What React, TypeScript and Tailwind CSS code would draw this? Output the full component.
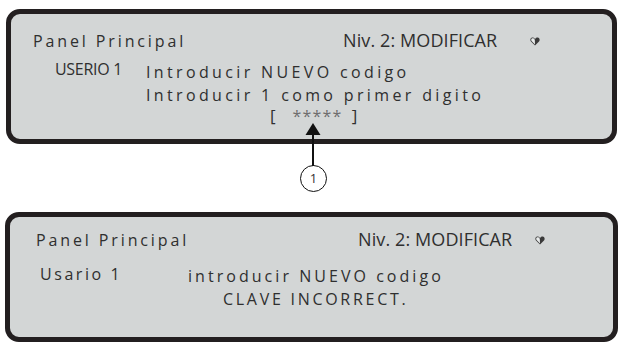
import React from 'react';

const font = { fontFamily: '"Open Sans", "Noto Sans", sans-serif' };

const Heart: React.FC = () => (
  <svg width="10" height="9" viewBox="0 0 10 9" className="mt-[1px] self-center">
    <path d="M5 8.6 L1 4.4 C-0.2 3 0.3 0.6 2.3 0.4 C3.5 0.3 4.5 1 5 2 C5.5 1 6.5 0.3 7.7 0.4 C9.7 0.6 10.2 3 9 4.4 Z" fill="#3a3a3a" />
    <path d="M5 7.6 L1.6 4 C0.8 3 1.2 1.3 2.5 1.2 C3.6 1.1 4.4 1.8 4.8 2.8 L5 7.6 Z" fill="#e9ecec" />
  </svg>
);

const Panel: React.FC<{ className: string; children: React.ReactNode }> = ({ className, children }) => (
  <div className={`border-[5px] border-[#231f20] rounded-[14px] bg-[#d3d6d6] text-[#2f2f2f] ${className}`}>
    {children}
  </div>
);

const App: React.FC = () => {
  return (
    <div className="w-[618px] h-[342px] overflow-hidden bg-white pt-[9px]" style={font}>
      <div className="relative">
        <Panel className="ml-[6px] w-[611px] h-[135px]">
          <div className="flex items-baseline pl-[22px] pt-[15px] leading-[23px]">
            <span className="w-[310px] text-[16px] tracking-[0.18em]">Panel Principal</span>
            <span className="w-[187px] text-[18px] tracking-[0.1px]">Niv. 2: MODIFICAR</span>
            <Heart />
          </div>
          <div className="flex items-start pl-[44px] mt-[8px]">
            <span className="w-[91px] text-[16px] leading-[17px] tracking-[-0.3px]">USERIO 1</span>
            <div className="flex flex-col text-[16px] tracking-[0.21em]">
              <span className="leading-[23px]">Introducir NUEVO codigo</span>
              <span className="leading-[23px]">Introducir 1 como primer digito</span>
              <div className="flex items-baseline leading-[17px] ml-[124px] tracking-normal">
                <span className="text-[17px]">[</span>
                <span className="ml-[17px] text-[16px] text-[#6e6e6e] tracking-[1.2px]">*****</span>
                <span className="ml-[9px] text-[17px]">]</span>
              </div>
            </div>
          </div>
        </Panel>

        <svg className="absolute left-[304px] top-[113px]" width="18" height="44" viewBox="0 0 18 44">
          <path d="M9 1 L16.5 13 L1.5 13 Z" fill="#111" />
          <line x1="9" y1="12" x2="9" y2="44" stroke="#111" strokeWidth="2" />
        </svg>

        <div className="h-[68px] flex items-start">
          <div className="ml-[300px] mt-[21px] w-[27px] h-[27px] rounded-full border-[1.5px] border-[#111] flex items-center justify-center text-[13px] text-[#333] leading-none">
            1
          </div>
        </div>
      </div>

      <Panel className="ml-[5px] w-[613px] h-[130px]">
        <div className="flex items-baseline pl-[26px] pt-[11px] leading-[23px]">
          <span className="w-[322px] text-[16px] tracking-[0.18em]">Panel Principal</span>
          <span className="w-[177px] text-[18px] tracking-[0.1px]">Niv. 2: MODIFICAR</span>
          <Heart />
        </div>
        <div className="flex items-start pl-[30px] mt-[11px] text-[16px] leading-[23px] tracking-[0.16em]">
          <span className="w-[148px]">Usario 1</span>
          <div className="flex flex-col pt-[2px] tracking-[0.19em]">
            <span>introducir NUEVO codigo</span>
            <span className="ml-[35px] tracking-[0.17em]">CLAVE INCORRECT.</span>
          </div>
        </div>
      </Panel>
    </div>
  );
};

export default App;
